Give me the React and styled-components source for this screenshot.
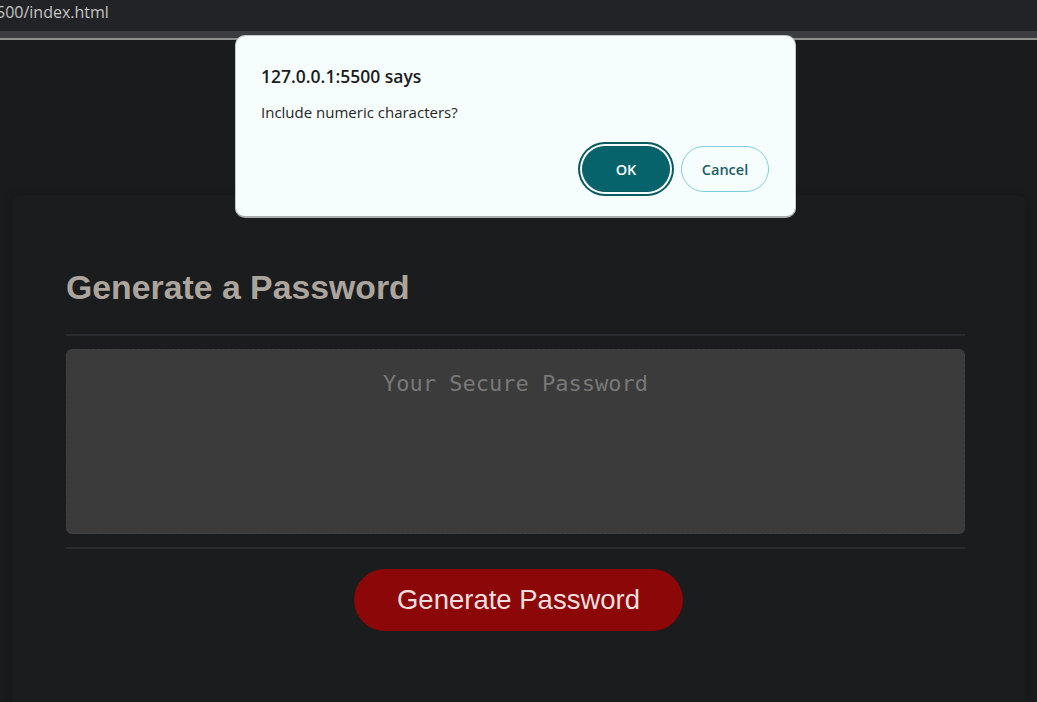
import React from 'react';
import styled, { createGlobalStyle } from 'styled-components';

const Global = createGlobalStyle`
  html, body {
    margin: 0;
    padding: 0;
    background: #1a1b1d;
    overflow: hidden;
  }
  * { box-sizing: border-box; }
`;

const Shell = styled.div`
  position: relative;
  width: 1037px;
  height: 702px;
  display: flex;
  flex-direction: column;
  background: #1a1b1d;
`;

const AddressBar = styled.div`
  height: 31px;
  background: #222326;
  display: flex;
  align-items: center;
  padding-bottom: 7px;
  overflow: hidden;
  span {
    margin-left: -4px;
    font-family: "Open Sans", "Noto Sans", sans-serif;
    font-size: 16px;
    color: #c3c3c3;
    white-space: nowrap;
  }
`;

const TabStrip = styled.div`
  height: 9px;
  background: #3b3c3f;
  border-bottom: 2px solid #8e8e8e;
`;

const Page = styled.div`
  flex: 1;
  padding: 155px 12px 0 12px;
`;

const Card = styled.div`
  height: 100%;
  background: #1b1c1e;
  border-radius: 8px 8px 0 0;
  box-shadow: 0 0 8px rgba(0, 0, 0, 0.18);
  padding: 72px 60px 0 54px;
  display: flex;
  flex-direction: column;
`;

const Heading = styled.h2`
  margin: 0;
  font-family: "Liberation Sans", Arial, sans-serif;
  font-weight: 700;
  font-size: 33.8px;
  line-height: 40px;
  color: #aba59d;
`;

const Rule = styled.div`
  height: 2px;
  flex: none;
  background: #2a2b2e;
  margin: ${p => p.$margin};
`;

const Output = styled.textarea`
  display: block;
  width: 100%;
  height: 185px;
  flex: none;
  resize: none;
  background: #3b3b3b;
  border: 1px dashed #424242;
  border-radius: 6px;
  padding: 20px 10px;
  text-align: center;
  font-family: "DejaVu Sans Mono", "Liberation Mono", monospace;
  font-size: 22px;
  line-height: 28px;
  color: #ddd;
  outline: none;
  &::placeholder {
    color: #787878;
  }
`;

const Footer = styled.div`
  display: flex;
  justify-content: center;
  padding-left: 6px;
  margin-top: 20px;
`;

const GenerateButton = styled.button`
  width: 329px;
  height: 62px;
  border: none;
  border-radius: 31px;
  background: #8b0708;
  color: #f2dede;
  font-family: "Liberation Sans", Arial, sans-serif;
  font-size: 27.5px;
  cursor: pointer;
`;

const Dialog = styled.div`
  position: absolute;
  left: 235px;
  top: 35px;
  width: 561px;
  height: 183px;
  background: #f6fdfd;
  border: 1px solid #c3c7c8;
  border-bottom: 2px solid #a9adae;
  border-radius: 10px;
  padding: 27px 26px 0 25px;
  font-family: "Open Sans", "Noto Sans", sans-serif;
  display: flex;
  flex-direction: column;
`;

const DialogTitle = styled.div`
  font-size: 17.5px;
  font-weight: 600;
  line-height: 26px;
  color: #1d1d1d;
`;

const DialogText = styled.div`
  margin-top: 13px;
  font-size: 15px;
  line-height: 21px;
  color: #262626;
`;

const Actions = styled.div`
  margin-top: 23px;
  display: flex;
  justify-content: flex-end;
  align-items: center;
  gap: 11px;
`;

const DialogButton = styled.button`
  width: 88px;
  height: 46px;
  border-radius: 23px;
  font-family: "Open Sans", "Noto Sans", sans-serif;
  font-size: 14.5px;
  font-weight: 600;
  cursor: pointer;
  border: 1px solid ${p => (p.$primary ? '#0a5a62' : '#7fcfdb')};
  background: ${p => (p.$primary ? '#06636b' : '#f6fdfd')};
  color: ${p => (p.$primary ? '#ffffff' : '#1f5d66')};
  box-shadow: ${p => (p.$primary ? '0 0 0 2px #f6fdfd, 0 0 0 4px #0b5960' : 'none')};
`;

export default function App() {
  return (
    <Shell>
      <Global />
      <AddressBar>
        <span>500/index.html</span>
      </AddressBar>
      <TabStrip />
      <Page>
        <Card>
          <Heading>Generate a Password</Heading>
          <Rule $margin="27px 0 13px" />
          <Output placeholder="Your Secure Password" readOnly />
          <Rule $margin="13px 0 0" />
          <Footer>
            <GenerateButton>Generate Password</GenerateButton>
          </Footer>
        </Card>
      </Page>
      <Dialog>
        <DialogTitle>127.0.0.1:5500 says</DialogTitle>
        <DialogText>Include numeric characters?</DialogText>
        <Actions>
          <DialogButton $primary>OK</DialogButton>
          <DialogButton>Cancel</DialogButton>
        </Actions>
      </Dialog>
    </Shell>
  );
}
